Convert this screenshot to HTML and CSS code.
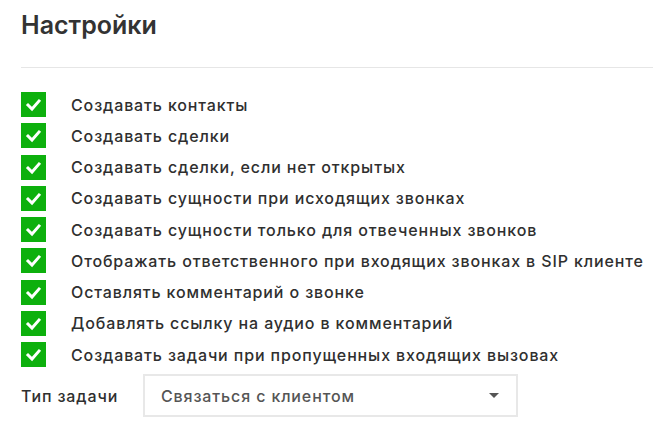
FILE: index.html
```html
<!DOCTYPE html>
<html lang="ru">
<head>
<meta charset="utf-8">
<link rel="stylesheet" href="styles.css">
</head>
<body>
<div class="page">
  <h1 class="title">Настройки</h1>
  <div class="divider"></div>
  <ul class="options">
    <li class="option"><span class="check"><svg viewBox="0 0 25 25"><path d="M7 13l4 4 7-8" /></svg></span><span class="label">Создавать контакты</span></li>
    <li class="option"><span class="check"><svg viewBox="0 0 25 25"><path d="M7 13l4 4 7-8" /></svg></span><span class="label">Создавать сделки</span></li>
    <li class="option"><span class="check"><svg viewBox="0 0 25 25"><path d="M7 13l4 4 7-8" /></svg></span><span class="label">Создавать сделки, если нет открытых</span></li>
    <li class="option"><span class="check"><svg viewBox="0 0 25 25"><path d="M7 13l4 4 7-8" /></svg></span><span class="label">Создавать сущности при исходящих звонках</span></li>
    <li class="option"><span class="check"><svg viewBox="0 0 25 25"><path d="M7 13l4 4 7-8" /></svg></span><span class="label">Создавать сущности только для отвеченных звонков</span></li>
    <li class="option"><span class="check"><svg viewBox="0 0 25 25"><path d="M7 13l4 4 7-8" /></svg></span><span class="label">Отображать ответственного при входящих звонках в SIP клиенте</span></li>
    <li class="option"><span class="check"><svg viewBox="0 0 25 25"><path d="M7 13l4 4 7-8" /></svg></span><span class="label">Оставлять комментарий о звонке</span></li>
    <li class="option"><span class="check"><svg viewBox="0 0 25 25"><path d="M7 13l4 4 7-8" /></svg></span><span class="label">Добавлять ссылку на аудио в комментарий</span></li>
    <li class="option"><span class="check"><svg viewBox="0 0 25 25"><path d="M7 13l4 4 7-8" /></svg></span><span class="label">Создавать задачи при пропущенных входящих вызовах</span></li>
  </ul>
  <div class="field">
    <span class="field-label">Тип задачи</span>
    <div class="select">
      <span class="select-value">Связаться с клиентом</span>
      <span class="caret"></span>
    </div>
  </div>
</div>
</body>
</html>
```

FILE: styles.css
```css
html, body {
  margin: 0;
  padding: 0;
  background: #fff;
}
body {
  font-family: "Inter", "Noto Sans", sans-serif;
  color: #333;
}
.page {
  padding: 8px 0 0 21px;
}
.title {
  margin: 0;
  font-size: 25px;
  font-weight: 600;
  line-height: 34px;
  color: #333;
}
.divider {
  height: 1px;
  background: #e6e6e6;
  margin-top: 25px;
}
.options {
  list-style: none;
  margin: 24px 0 0;
  padding: 0;
  display: flex;
  flex-direction: column;
  gap: 6.25px;
}
.option {
  display: flex;
  align-items: center;
  height: 25px;
}
.check {
  width: 25px;
  height: 25px;
  background: #0db00d;
  display: flex;
  flex: none;
}
.check svg {
  width: 25px;
  height: 25px;
}
.check path {
  fill: none;
  stroke: #fff;
  stroke-width: 3;
  stroke-linecap: square;
}
.label {
  margin-left: 25px;
  font-size: 16px;
  font-weight: 500;
  letter-spacing: 0.87px;
  color: #2f2f2f;
}
.field {
  display: flex;
  align-items: center;
  margin-top: 7px;
}
.field-label {
  width: 122px;
  font-size: 16px;
  font-weight: 500;
  letter-spacing: 0.87px;
  color: #2f2f2f;
}
.select {
  height: 39px;
  border: 2px solid #e8e8e8;
  display: flex;
  align-items: center;
  justify-content: space-between;
  padding: 0 17px 0 16px;
  width: 338px;
}
.select-value {
  font-size: 16px;
  font-weight: 500;
  letter-spacing: 0.87px;
  color: #555;
}
.caret {
  width: 0;
  height: 0;
  border-left: 5px solid transparent;
  border-right: 5px solid transparent;
  border-top: 5px solid #555;
}
```
